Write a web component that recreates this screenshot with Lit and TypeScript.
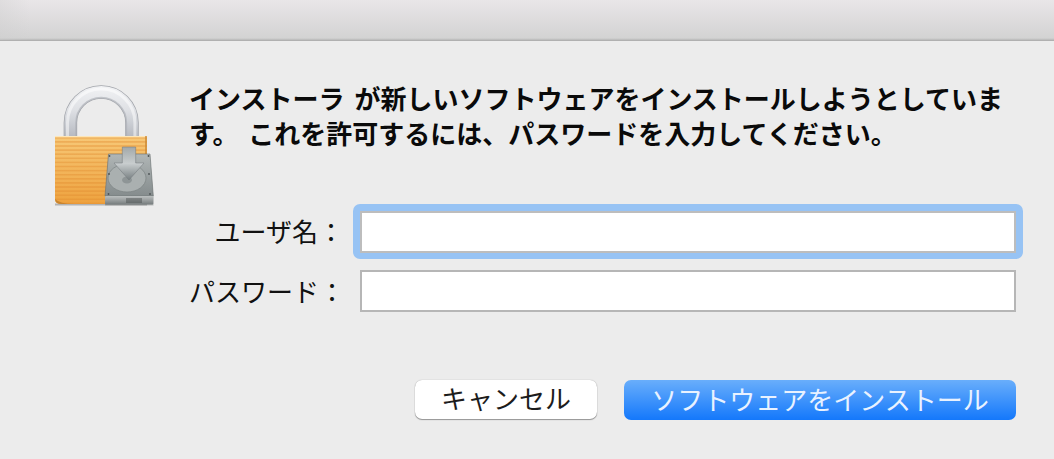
import { LitElement, html, css, svg } from "lit";
import { customElement } from "lit/decorators.js";

const lockIcon = svg`
  <defs>
    <linearGradient id="shackle" gradientUnits="userSpaceOnUse" x1="0" x2="0" y1="86" y2="138">
      <stop offset="0" stop-color="#f1f2f4" />
      <stop offset="0.45" stop-color="#dfe1e5" />
      <stop offset="0.75" stop-color="#c8cbd1" />
      <stop offset="1" stop-color="#b4b7be" />
    </linearGradient>
    <linearGradient id="body" x1="0" x2="0" y1="0" y2="1">
      <stop offset="0" stop-color="#f7c877" />
      <stop offset="1" stop-color="#eea23e" />
    </linearGradient>
    <pattern id="stripes" width="4" height="4.1" patternUnits="userSpaceOnUse" y="137">
      <rect width="4" height="1.6" fill="#e08a2e" opacity="0.4" />
    </pattern>
    <linearGradient id="drive" x1="0" x2="0" y1="0" y2="1">
      <stop offset="0" stop-color="#b0b6b6" />
      <stop offset="1" stop-color="#858c8d" />
    </linearGradient>
    <linearGradient id="arrow" x1="0" x2="0" y1="0" y2="1">
      <stop offset="0" stop-color="#a2a8a9" />
      <stop offset="0.5" stop-color="#c8cdce" />
      <stop offset="1" stop-color="#767e80" />
    </linearGradient>
    <linearGradient id="base" x1="0" x2="0" y1="0" y2="1">
      <stop offset="0" stop-color="#bcc0c0" />
      <stop offset="1" stop-color="#757b7c" />
    </linearGradient>
  </defs>
  <path d="M70.4 138V122.700a30.800 30.800 0 0 1 61.600 0V138" fill="none" stroke="#a1a4aa" stroke-width="13.500" />
  <path d="M70.400 138V122.700a30.800 30.800 0 0 1 61.600 0V138" fill="none" stroke="url(#shackle)" stroke-width="12" />
  <path d="M67.500 138V122.700a33.700 33.700 0 0 1 67.400 0V138" fill="none" stroke="#fff" stroke-opacity="0.500" stroke-width="3" />
  <path d="M76 138V122.700a25.200 25.200 0 0 1 50.400 0V138" fill="none" stroke="#a9acb3" stroke-opacity="0.600" stroke-width="1.500" />
  <rect x="55" y="203.500" width="92" height="2" fill="#8d8d8d" opacity="0.6" />
  <path d="M55 136h92v68H62q-7 0-7-4z" fill="url(#body)" />
  <path d="M55 136h92v68H62q-7 0-7-4z" fill="url(#stripes)" />
  <rect x="55" y="136" width="92" height="1.300" fill="#fde6b8" />
  <rect x="145" y="136" width="2" height="68" fill="#c98632" opacity="0.7" />
  <path d="M55 199q0 5 7 5h12q-14 0-19-5z" fill="#b97a2c" opacity="0.7" />
  <path d="M108.300 154H150L153.500 196.500V204.500H105V196.500Z" fill="#5d6364" opacity="0.35" transform="translate(0 1)" />
  <path d="M108.500 154H150L153.300 196H105Z" fill="url(#drive)" stroke="#6d7374" stroke-width="0.600" />
  <ellipse cx="127" cy="178" rx="19" ry="14" fill="#aab0b0" stroke="#7b8283" stroke-width="0.700" />
  <ellipse cx="127" cy="180" rx="5" ry="3.500" fill="#8e9596" />
  <path d="M122.300 147H135.700V163H144L129 180 114 163H122.300Z" fill="url(#arrow)" stroke="#70777a" stroke-width="0.500" />
  <rect x="105" y="196" width="48.300" height="8.500" rx="1" fill="url(#base)" />
  <path d="M127 198v5M129 198v5M131 198v5M133 198v5M135 198v5M137 198v5M139 198v5M141 198v5" stroke="#3c4142" stroke-width="0.800" />
  <circle cx="109" cy="174" r="0.900" fill="#4d5354" />
  <circle cx="149" cy="174" r="0.900" fill="#4d5354" />
  <circle cx="108.500" cy="194" r="0.900" fill="#4d5354" />
  <circle cx="150" cy="194" r="0.900" fill="#4d5354" />
  <circle cx="109.500" cy="156" r="0.900" fill="#4d5354" />
  <circle cx="148.500" cy="156" r="0.900" fill="#4d5354" />
`;

@customElement("app-root")
export class AppRoot extends LitElement {
  static styles = css`
    :host {
      display: block;
      width: 1054px;
      height: 459px;
      overflow: hidden;
      background: #ececec;
      font-family: "Noto Sans CJK JP", "Liberation Sans", sans-serif;
      color: #111;
    }

    .titlebar {
      height: 41px;
      box-sizing: border-box;
      border-bottom: 1px solid #b0b0b0;
      background: linear-gradient(90deg, rgba(205, 205, 205, 0.35), rgba(205, 205, 205, 0) 30px),
        linear-gradient(#e9e6e8, #d3d3d3 95%, #b8b8b8);
    }

    .main {
      display: flex;
      align-items: flex-start;
      padding: 39px 0 0 50px;
    }

    .icon {
      width: 110px;
      height: 130px;
      flex: none;
      display: block;
    }

    .content {
      margin-left: 29px;
      width: 830px;
    }

    .message {
      margin: 0;
      width: 818px;
      font-size: 26px;
      font-weight: 700;
      line-height: 35px;
      word-spacing: 4px;
      color: #0a0a0a;
    }

    .form {
      display: grid;
      grid-template-columns: 155px 656px;
      column-gap: 16px;
      row-gap: 18px;
      align-items: center;
      margin-top: 60px;
    }

    .form label {
      font-size: 26px;
      line-height: 42px;
      text-align: right;
      white-space: nowrap;
    }

    .field {
      display: block;
      width: 100%;
      height: 42px;
      box-sizing: border-box;
      margin: 0;
      border: 2px solid #b6b6b6;
      border-radius: 0;
      background: #fff;
      outline: none;
    }

    .ring {
      margin: -7px;
      padding: 7px 7px 6px;
      border-radius: 7px;
      background: #97c3f4;
    }

    .ring .field {
      border-color: #bdbdbd;
    }

    .actions {
      display: flex;
      gap: 27px;
      margin: 68px 0 0 226px;
    }

    button {
      height: 40px;
      box-sizing: border-box;
      margin: 0;
      padding: 0 0 3px;
      border-radius: 7px;
      font-family: inherit;
      font-size: 26px;
      line-height: 1;
      white-space: nowrap;
    }

    .cancel {
      width: 182px;
      height: 39px;
      border: 0;
      background: #fff;
      color: #1c1c1c;
      box-shadow: 0 0 1px rgba(0, 0, 0, 0.35), 0 1px 1px rgba(0, 0, 0, 0.35);
    }

    .install {
      width: 392px;
      border: 0;
      background: linear-gradient(#69aefb, #1478fb);
      color: #e9f2ff;
    }
  `;

  render() {
    return html`
      <div class="titlebar"></div>
      <div class="main">
        <svg class="icon" viewBox="50 80 110 130">${lockIcon}</svg>
        <div class="content">
          <p class="message">インストーラ が新しいソフトウェアをインストールしようとしています。 これを許可するには、パスワードを入力してください。</p>
          <div class="form">
            <label>ユーザ名：</label>
            <div class="ring"><input class="field" type="text" /></div>
            <label>パスワード：</label>
            <input class="field" type="password" />
          </div>
          <div class="actions">
            <button class="cancel">キャンセル</button>
            <button class="install">ソフトウェアをインストール</button>
          </div>
        </div>
      </div>
    `;
  }
}
